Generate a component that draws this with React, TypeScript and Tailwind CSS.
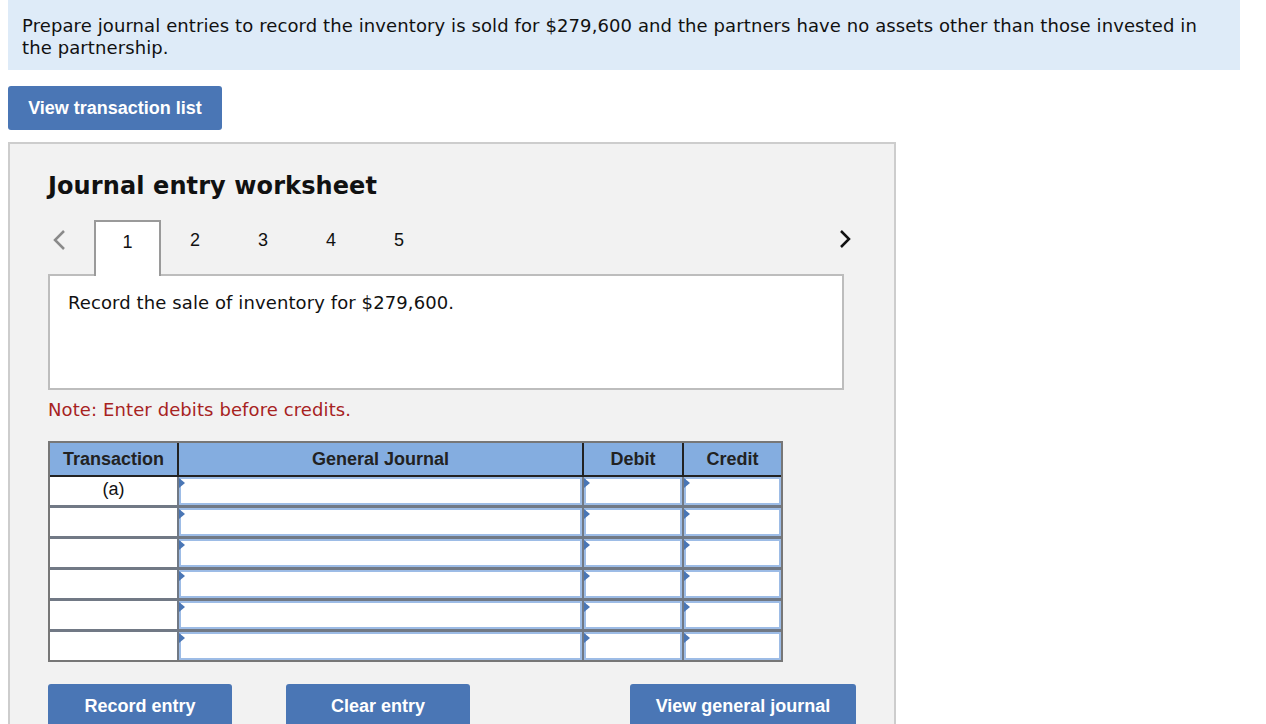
const tabs = [1, 2, 3, 4, 5];
const rows = ["(a)", "", "", "", "", ""];

function InputBox() {
  return (
    <div className="relative h-[28px] bg-white border-2 border-[#9dbce6]">
      <span className="absolute -left-[2px] -top-[1px] w-0 h-0 border-y-[5px] border-y-transparent border-l-[6px] border-l-[#4a76b5]" />
    </div>
  );
}

export default function App() {
  return (
    <div className="w-[1266px] h-[724px] overflow-hidden bg-white font-['DejaVu_Sans',Verdana,sans-serif] text-[#111]">
      <div className="mx-2 w-[1232px] bg-[#deebf8] px-[14px] pt-[15px] pb-[11px] text-[18px] leading-[22px] tracking-[0.1px]">
        Prepare journal entries to record the inventory is sold for $279,600 and the partners have no assets other than those invested in the partnership.
      </div>

      <button className="ml-2 mt-4 h-[44px] w-[214px] rounded-[3px] bg-[#4a76b5] text-white text-[18px] font-bold font-['Liberation_Sans',Arial,sans-serif]">
        View transaction list
      </button>

      <div className="ml-2 mt-3 w-[888px] h-[600px] bg-[#f2f2f2] border-2 border-[#cdcdcd] pl-[38px] pr-[50px]">
        <h2 className="mt-[26px] text-[24px] leading-[32px] font-bold tracking-[0.1px]">Journal entry worksheet</h2>

        <div className="mt-[18px] flex items-start">
          <svg className="mt-[9px] ml-[4px] w-[14px] h-[22px]" viewBox="0 0 14 22">
            <path d="M12 2 L3 11 L12 20" fill="none" stroke="#8a8a8a" strokeWidth="2.5" />
          </svg>
          <div className="ml-[28px] flex font-['Liberation_Sans',Arial,sans-serif] text-[18px]">
            {tabs.map((t) =>
              t === 1 ? (
                <div key={t} className="relative z-10 w-[67px] h-[56px] bg-white border-2 border-b-0 border-[#9a9a9a] text-center pt-[7px]">
                  {t}
                </div>
              ) : (
                <div key={t} className="w-[68px] text-center pt-[7px]">
                  {t}
                </div>
              )
            )}
          </div>
          <svg className="ml-auto mt-[9px] mr-[-8px] w-[14px] h-[20px]" viewBox="0 0 14 20">
            <path d="M3 2 L11 10 L3 18" fill="none" stroke="#111" strokeWidth="2.5" />
          </svg>
        </div>

        <div className="-mt-[2px] w-[796px] h-[116px] bg-white border-2 border-[#bdbdbd] px-[18px] pt-[16px] text-[18px] leading-[22px] tracking-[0.1px]">
          Record the sale of inventory for $279,600.
        </div>

        <p className="mt-[8px] text-[18px] leading-[24px] tracking-[0.1px] text-[#a7231f]">Note: Enter debits before credits.</p>

        <div className="mt-[19px] w-[735px] border-2 border-[#777] bg-[#717985] font-['Liberation_Sans',Arial,sans-serif]">
          <div className="grid grid-cols-[127px_403px_98px_97px] gap-x-[2px] bg-[#222] border-b-2 border-[#222] text-[18px] font-bold text-[#222]">
            <div className="h-[32px] bg-[#84ade0] flex items-center justify-center">Transaction</div>
            <div className="h-[32px] bg-[#84ade0] flex items-center justify-center">General Journal</div>
            <div className="h-[32px] bg-[#84ade0] flex items-center justify-center">Debit</div>
            <div className="h-[32px] bg-[#84ade0] flex items-center justify-center">Credit</div>
          </div>
          <div className="grid grid-cols-[127px_403px_98px_97px] gap-x-[2px] gap-y-[3px]">
            {rows.map((r, i) => (
              <div key={i} className="contents">
                <div className="h-[28px] bg-white text-center text-[18px] leading-[24px]">{r}</div>
                <InputBox />
                <InputBox />
                <InputBox />
              </div>
            ))}
          </div>
        </div>

        <div className="mt-[22px] flex font-['Liberation_Sans',Arial,sans-serif] text-[18px] font-bold text-white">
          <button className="shrink-0 w-[184px] h-[44px] rounded-t-[3px] bg-[#4a76b5]">Record entry</button>
          <button className="shrink-0 ml-[54px] w-[184px] h-[44px] rounded-t-[3px] bg-[#4a76b5]">Clear entry</button>
          <button className="shrink-0 ml-[160px] w-[226px] h-[44px] rounded-t-[3px] bg-[#4a76b5]">View general journal</button>
        </div>
      </div>
    </div>
  );
}
